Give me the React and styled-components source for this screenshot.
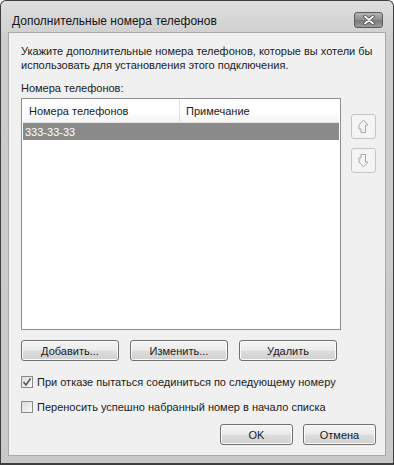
import React from "react";
import styled, { createGlobalStyle } from "styled-components";

const Global = createGlobalStyle`
  html, body { margin: 0; padding: 0; background: #fff; }
  * { box-sizing: border-box; }
`;

const Ventana = styled.div`
  width: 394px;
  height: 465px;
  display: flex;
  flex-direction: column;
  background: linear-gradient(180deg, #dedede 0px, #cdcdcd 40px, #c9c9c9 100%);
  border: 1px solid #3e3e3e;
  border-bottom-width: 2px;
  border-radius: 6px 6px 0 0;
  font-family: "Liberation Sans", Arial, sans-serif;
  font-size: 11px;
  color: #1a1a1a;
`;

const Titulo = styled.div`
  height: 31px;
  flex: none;
  display: flex;
  justify-content: space-between;
  padding: 0 10px 0 11px;

  span {
    font-size: 12px;
    color: #141414;
    padding-top: 13px;
  }
`;

const Cerrar = styled.div`
  width: 29px;
  height: 16px;
  margin-top: 11px;
  border: 1px solid #5a5a5a;
  border-radius: 3px;
  background: linear-gradient(180deg, #b5b5b5 0%, #8d8d8d 50%, #7a7a7a 51%, #9a9a9a 100%);
  display: flex;
  align-items: center;
  justify-content: center;
`;

const Contenido = styled.div`
  flex: 1;
  margin: 0 7px 7px 7px;
  background: #f0f0f0;
  border: 1px solid #a8a8a8;
  padding: 11px 6px 0 12px;
  display: flex;
  flex-direction: column;
`;

const Texto = styled.p`
  margin: 0;
  line-height: 14px;
`;

const Etiqueta = styled.div`
  margin-top: 9px;
  line-height: 14px;
`;

const FilaLista = styled.div`
  display: flex;
  margin-top: 3px;
`;

const Lista = styled.div`
  width: 320px;
  height: 232px;
  background: #fff;
  border: 1px solid #8e8e8e;
  padding: 1px;
`;

const Cabecera = styled.div`
  display: flex;
  height: 23px;
  background: linear-gradient(180deg, #ffffff 0%, #ffffff 55%, #f3f3f3 100%);
  border-bottom: 1px solid #e2e2e2;
`;

const Columna = styled.div`
  width: ${(p) => p.$ancho || "auto"};
  flex: ${(p) => (p.$ancho ? "none" : "1")};
  display: flex;
  align-items: center;
  padding-left: 6px;
  border-right: ${(p) => (p.$linea ? "1px solid #e0e0e0" : "none")};
`;

const Fila = styled.div`
  height: 17px;
  display: flex;
  align-items: center;
  padding-left: 2px;
  background: ${(p) => (p.$sel ? "#8a8a8a" : "transparent")};
  color: ${(p) => (p.$sel ? "#fff" : "inherit")};
`;

const Lado = styled.div`
  display: flex;
  flex-direction: column;
  gap: 9px;
  padding: 16px 0 0 10px;
`;

const Flecha = styled.div`
  width: 25px;
  height: 25px;
  border: 1px solid #c4c4c4;
  border-radius: 3px;
  background: #f4f4f4;
  display: flex;
  align-items: center;
  justify-content: center;
`;

const Botones = styled.div`
  display: flex;
  gap: 11px;
  margin-top: 10px;
`;

const Boton = styled.button`
  width: ${(p) => p.$ancho || "98px"};
  height: 21px;
  padding: 0;
  border: 1px solid #707070;
  border-radius: 3px;
  background: linear-gradient(180deg, #f4f4f4 0%, #ebebeb 48%, #dddddd 52%, #d0d0d0 100%);
  box-shadow: inset 0 0 0 1px #fbfbfb;
  font-family: inherit;
  font-size: 11px;
  color: #1a1a1a;
`;

const Opcion = styled.label`
  display: flex;
  align-items: center;
  gap: 4px;
  margin-top: ${(p) => p.$arriba || "8px"};
  height: 14px;
  white-space: nowrap;
`;

const Caja = styled.span`
  width: 12px;
  height: 12px;
  flex: none;
  border: 1px solid #8a8a8a;
  background: linear-gradient(135deg, #dcdcdc, #f8f8f8);
  display: flex;
  align-items: center;
  justify-content: center;
`;

const Pie = styled.div`
  display: flex;
  justify-content: flex-end;
  gap: 10px;
  margin-top: 10px;
  padding-right: 3px;
`;

const FlechaArriba = () => (
  <svg width="11" height="15" viewBox="0 0 11 15">
    <path d="M5.5 1 L10 6 L7.5 6 L7.5 13.5 L3 13.5 L3 10 L1 10 L1 6 Z" fill="none" stroke="#a8a8a8" strokeWidth="1" />
  </svg>
);

const FlechaAbajo = () => (
  <svg width="11" height="15" viewBox="0 0 11 15">
    <path d="M5.5 14 L10 9 L7.5 9 L7.5 1.5 L3 1.5 L3 5 L1 5 L1 9 Z" fill="none" stroke="#a8a8a8" strokeWidth="1" />
  </svg>
);

export default function App() {
  return (
    <>
      <Global />
      <Ventana>
        <Titulo>
          <span>Дополнительные номера телефонов</span>
          <Cerrar>
            <svg width="12" height="10" viewBox="0 0 12 10">
              <path d="M2 1.5 L10 8.5 M10 1.5 L2 8.5" stroke="#4a4a4a" strokeWidth="3.4" strokeLinecap="round" />
              <path d="M2 1.5 L10 8.5 M10 1.5 L2 8.5" stroke="#fff" strokeWidth="1.8" strokeLinecap="round" />
            </svg>
          </Cerrar>
        </Titulo>
        <Contenido>
          <Texto>
            Укажите дополнительные номера телефонов, которые вы хотели бы использовать для установления этого подключения.
          </Texto>
          <Etiqueta>Номера телефонов:</Etiqueta>
          <FilaLista>
            <Lista>
              <Cabecera>
                <Columna $ancho="157px" $linea>Номера телефонов</Columna>
                <Columna>Примечание</Columna>
              </Cabecera>
              <Fila $sel>333-33-33</Fila>
            </Lista>
            <Lado>
              <Flecha><FlechaArriba /></Flecha>
              <Flecha><FlechaAbajo /></Flecha>
            </Lado>
          </FilaLista>
          <Botones>
            <Boton>Добавить...</Boton>
            <Boton>Изменить...</Boton>
            <Boton>Удалить</Boton>
          </Botones>
          <Opcion $arriba="14px">
            <Caja>
              <svg width="10" height="10" viewBox="0 0 10 10">
                <path d="M1.5 5 L4 8 L8.5 1.5" fill="none" stroke="#555" strokeWidth="1.6" />
              </svg>
            </Caja>
            При отказе пытаться соединиться по следующему номеру
          </Opcion>
          <Opcion $arriba="11px">
            <Caja />
            Переносить успешно набранный номер в начало списка
          </Opcion>
          <Pie>
            <Boton $ancho="73px">OK</Boton>
            <Boton $ancho="73px">Отмена</Boton>
          </Pie>
        </Contenido>
      </Ventana>
    </>
  );
}
